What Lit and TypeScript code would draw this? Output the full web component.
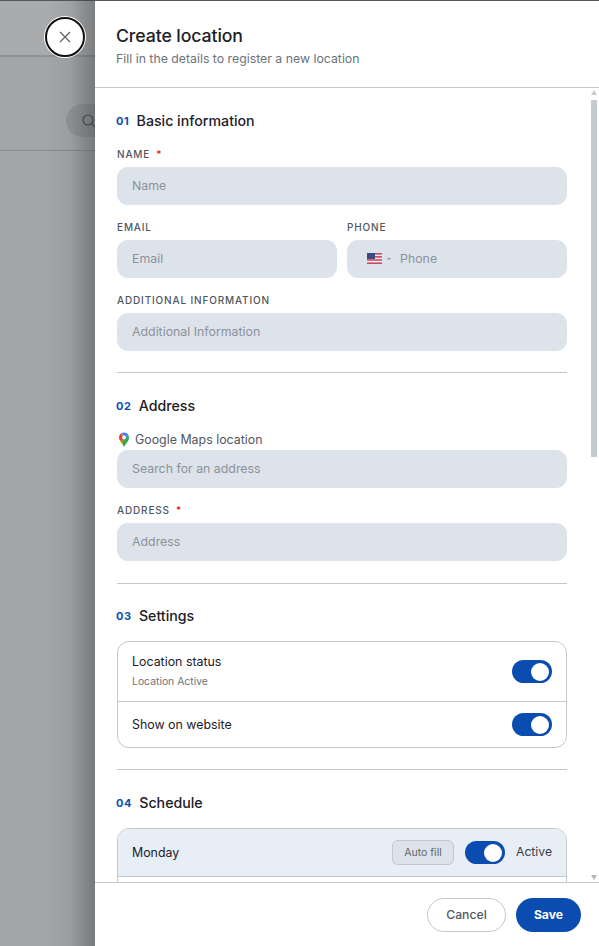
import { LitElement, html, css } from "lit";
import { customElement } from "lit/decorators.js";

@customElement("app-root")
export class AppRoot extends LitElement {
  static styles = css`
    :host { display: block; width: 599px; height: 946px; position: relative; overflow: hidden;
      font-family: Inter, "Liberation Sans", sans-serif; background: #a2a6a9; color: #1c2127; }
    .page { position: absolute; inset: 0; background: #a2a6a9; }
    .topline { height: 1px; background: #55585b; }
    .topbar { height: 54px; background: #a9abad; border-bottom: 2px solid #8d9296; box-sizing: content-box; }
    .searchrow { height: 94px; border-bottom: 1px solid #888c90; display: flex; align-items: flex-start; padding: 47px 0 0 66px; box-sizing: border-box; }
    .pill { width: 80px; height: 33px; border-radius: 17px; background: #929699; display: flex; align-items: center; padding-left: 15px; box-sizing: border-box; }
    .shade { position: absolute; top: 0; bottom: 0; left: 45px; width: 50px; background: linear-gradient(to right, rgba(50,50,50,0), rgba(50,50,50,0.07) 50%, rgba(50,50,50,0.38)); }
    .close { position: absolute; left: 45px; top: 17px; width: 40px; height: 40px; box-sizing: border-box; border-radius: 50%; background: #fff; border: 2px solid #111; box-shadow: 0 0 0 1px #fff; display: flex; align-items: center; justify-content: center; z-index: 3; }
    .panel { position: absolute; left: 95px; top: 1px; right: 0; bottom: 0; background: #fff; display: flex; flex-direction: column; }
    .head { height: 87px; box-sizing: border-box; border-bottom: 1px solid #c3c8ce; padding: 24px 22px 0 21px; flex: none; }
    h1 { margin: 0; font-size: 17.7px; line-height: 22px; font-weight: 500; color: #1c2127; letter-spacing: -0.1px; }
    .sub { font-size: 12.3px; line-height: 16px; color: #6b737c; margin-top: 4px; }
    .scroll { flex: 1; min-height: 0; overflow: hidden; position: relative; }
    .content { padding: 0 32px 0 22px; }
    section { padding: 22px 0 21px; border-bottom: 1px solid #c3c8ce; }
    section.addr { padding-bottom: 22px; }
    section.settings { padding-top: 21px; }
    section.last { border-bottom: 0; }
    .sec { display: flex; align-items: center; height: 21px; gap: 7px; margin-bottom: 15px; margin-left: -1px; }
    .field.first { padding-top: 2px; }
    .num { font-size: 11px; font-weight: 700; color: #0d4fb0; letter-spacing: 0.7px; }
    .title { font-size: 14.2px; font-weight: 450; color: #1c2127; }
    .field { display: flex; flex-direction: column; margin-bottom: 16px; }
    .field:last-child { margin-bottom: 0; }
    label { font-size: 10px; line-height: 12px; font-weight: 500; letter-spacing: 0.85px; color: #50575f; margin-bottom: 7px; height: 12px; display: block; white-space: nowrap; }
    .req { color: #d01818; margin-left: 6px; }
    .input { height: 38px; border-radius: 11px; background: #dde3ea; font-size: 12.35px; color: #8b929a; display: flex; align-items: center; padding: 0 0 1px 15px; box-sizing: border-box; white-space: nowrap; }
    .two { display: grid; grid-template-columns: 220px 220px; gap: 10px; margin-bottom: 16px; }
    .two .field { margin-bottom: 0; }
    .flag { margin-left: 5px; margin-right: 5px; display: block; }
    .caret { width: 0; height: 0; border-left: 2px solid transparent; border-right: 2px solid transparent; border-top: 2.5px solid #8b929a; margin-right: 9px; }
    .maps { display: flex; align-items: center; gap: 4px; font-size: 12.4px; line-height: 16px; color: #50575f; margin: 0 0 3px; height: 16px; padding-top: 1px; box-sizing: border-box; }
    .card { border: 1px solid #c3c8ce; border-radius: 12px; overflow: hidden; }
    .row { display: flex; align-items: center; justify-content: space-between; padding: 0 14px; box-sizing: border-box; }
    .r1 { height: 60px; border-bottom: 1px solid #c3c8ce; }
    .r2 { height: 45px; }
    .rt { font-size: 12.4px; line-height: 16px; color: #1c2127; }
    .rs { font-size: 10.4px; line-height: 14px; color: #6b737c; margin-top: 5px; }
    .toggle { width: 40px; height: 23px; border-radius: 12px; background: #0b4cb0; position: relative; flex: none; }
    .knob { position: absolute; right: 3px; top: 2.5px; width: 18px; height: 18px; border-radius: 50%; background: #fff; }
    .mon { height: 48px; background: #e8eef5; border-bottom: 1px solid #c3c8ce; }
    .tue { height: 60px; }
    .right { display: flex; align-items: center; }
    .auto { font-size: 10.5px; color: #5e656d; background: #dde3ea; border: 1px solid #c3c8ce; border-radius: 6px; height: 25px; width: 62px; box-sizing: border-box; display: flex; align-items: center; justify-content: center; margin-right: 11px; }
    .active { font-size: 12.2px; color: #3a4047; margin-left: 11px; position: relative; top: -1px; }
    .sb { position: absolute; right: 0; top: 0; bottom: 0; width: 9px; background: #fff; }
    .thumb { position: absolute; left: 1px; top: 12px; width: 6px; height: 357px; background: #c3cad2; }
    .up, .down { position: absolute; left: 1px; width: 0; height: 0; border-left: 3.500px solid transparent; border-right: 3.500px solid transparent; }
    .up { top: 2px; border-bottom: 5px solid #c3cad2; }
    .down { bottom: 2px; border-top: 5px solid #b0b6bd; }
    .foot { height: 64px; flex: none; box-sizing: border-box; border-top: 1px solid #c3c8ce; display: flex; align-items: center; justify-content: flex-end; gap: 10px; padding: 0 18px 0 0; }
    .btn { height: 34px; border-radius: 17px; display: flex; align-items: center; justify-content: center; font-size: 12.2px; box-sizing: border-box; }
    .cancel { width: 79px; border: 1.5px solid #c3c8ce; color: #50575f; font-weight: 500; background: #fff; }
    .save { width: 65px; background: #0b4cb0; color: #fff; font-weight: 700; }
  `;

  private flag() {
    return html`<svg class="flag" width="15" height="11" viewBox="0 0 15 11">
      <rect width="15" height="11" fill="#f2f2f4"/>
      <rect y="0" width="15" height="1.6" fill="#c9475a"/><rect y="3.1" width="15" height="1.6" fill="#c9475a"/>
      <rect y="6.2" width="15" height="1.6" fill="#c9475a"/><rect y="9.4" width="15" height="1.6" fill="#c9475a"/>
      <rect width="8" height="6" fill="#3c4a82"/></svg>`;
  }
  private toggle() {
    return html`<div class="toggle"><div class="knob"></div></div>`;
  }
  private field(name: string, ph: string, req = false, first = false) {
    return html`<div class="field ${first ? "first" : ""}"><label>${name}${req ? html`<span class="req">*</span>` : ""}</label><div class="input">${ph}</div></div>`;
  }

  render() {
    return html`
      <div class="page">
        <div class="topline"></div>
        <div class="topbar"></div>
        <div class="searchrow"><div class="pill">
          <svg width="16" height="16" viewBox="0 0 16 16" fill="none" stroke="#4a4e52" stroke-width="1.2"><circle cx="7" cy="7" r="5"/><path d="M10.6 10.6 14 14"/></svg>
        </div></div>
      </div>
      <div class="shade"></div>
      <div class="close">
        <svg width="14" height="14" viewBox="0 0 14 14" fill="none" stroke="#5a6068" stroke-width="1.2"><path d="M2 2 12 12M12 2 2 12"/></svg>
      </div>
      <div class="panel">
        <div class="head">
          <h1>Create location</h1>
          <div class="sub">Fill in the details to register a new location</div>
        </div>
        <div class="scroll">
          <div class="content">
            <section>
              <div class="sec"><span class="num">01</span><span class="title">Basic information</span></div>
              ${this.field("NAME", "Name", true, true)}
              <div class="two">
                ${this.field("EMAIL", "Email")}
                <div class="field"><label>PHONE</label><div class="input">${this.flag()}<span class="caret"></span>Phone</div></div>
              </div>
              ${this.field("ADDITIONAL INFORMATION", "Additional Information")}
            </section>
            <section class="addr">
              <div class="sec"><span class="num">02</span><span class="title">Address</span></div>
              <div class="field">
                <div class="maps">
                  <svg width="14" height="15" viewBox="0 0 14 15">
                    <path d="M7 15C5.6 12 2 9.2 2 5.4A5 5 0 0 1 4 1.4L7 5Z" fill="#f5b70c"/>
                    <path d="M7 15c1.400-3 5-5.800 5-9.600 0-1-.3-1.900-.8-2.700L4.600 9.900C5.600 11.500 6.500 13 7 15Z" fill="#34a853"/>
                    <path d="M4 1.400A5 5 0 0 1 7 .4c1.800 0 3.300.9 4.200 2.300L9 5.500Z" fill="#4285f4"/>
                    <path d="M2 5.400a5 5 0 0 1 2-4L7 5 4.600 9.900C3.500 8.300 2 7.200 2 5.400Z" fill="#ea4335"/>
                    <circle cx="7" cy="5.400" r="1.900" fill="#fff"/>
                  </svg>
                  Google Maps location
                </div>
                <div class="input">Search for an address</div>
              </div>
              ${this.field("ADDRESS", "Address", true)}
            </section>
            <section class="settings">
              <div class="sec"><span class="num">03</span><span class="title">Settings</span></div>
              <div class="card">
                <div class="row r1"><div><div class="rt">Location status</div><div class="rs">Location Active</div></div>${this.toggle()}</div>
                <div class="row r2"><div class="rt">Show on website</div>${this.toggle()}</div>
              </div>
            </section>
            <section class="last">
              <div class="sec"><span class="num">04</span><span class="title">Schedule</span></div>
              <div class="card">
                <div class="row mon"><div class="rt">Monday</div>
                  <div class="right"><div class="auto">Auto fill</div>${this.toggle()}<span class="active">Active</span></div>
                </div>
                <div class="row tue"></div>
              </div>
            </section>
          </div>
          <div class="sb"><div class="up"></div><div class="thumb"></div><div class="down"></div></div>
        </div>
        <div class="foot">
          <div class="btn cancel">Cancel</div>
          <div class="btn save">Save</div>
        </div>
      </div>
    `;
  }
}
